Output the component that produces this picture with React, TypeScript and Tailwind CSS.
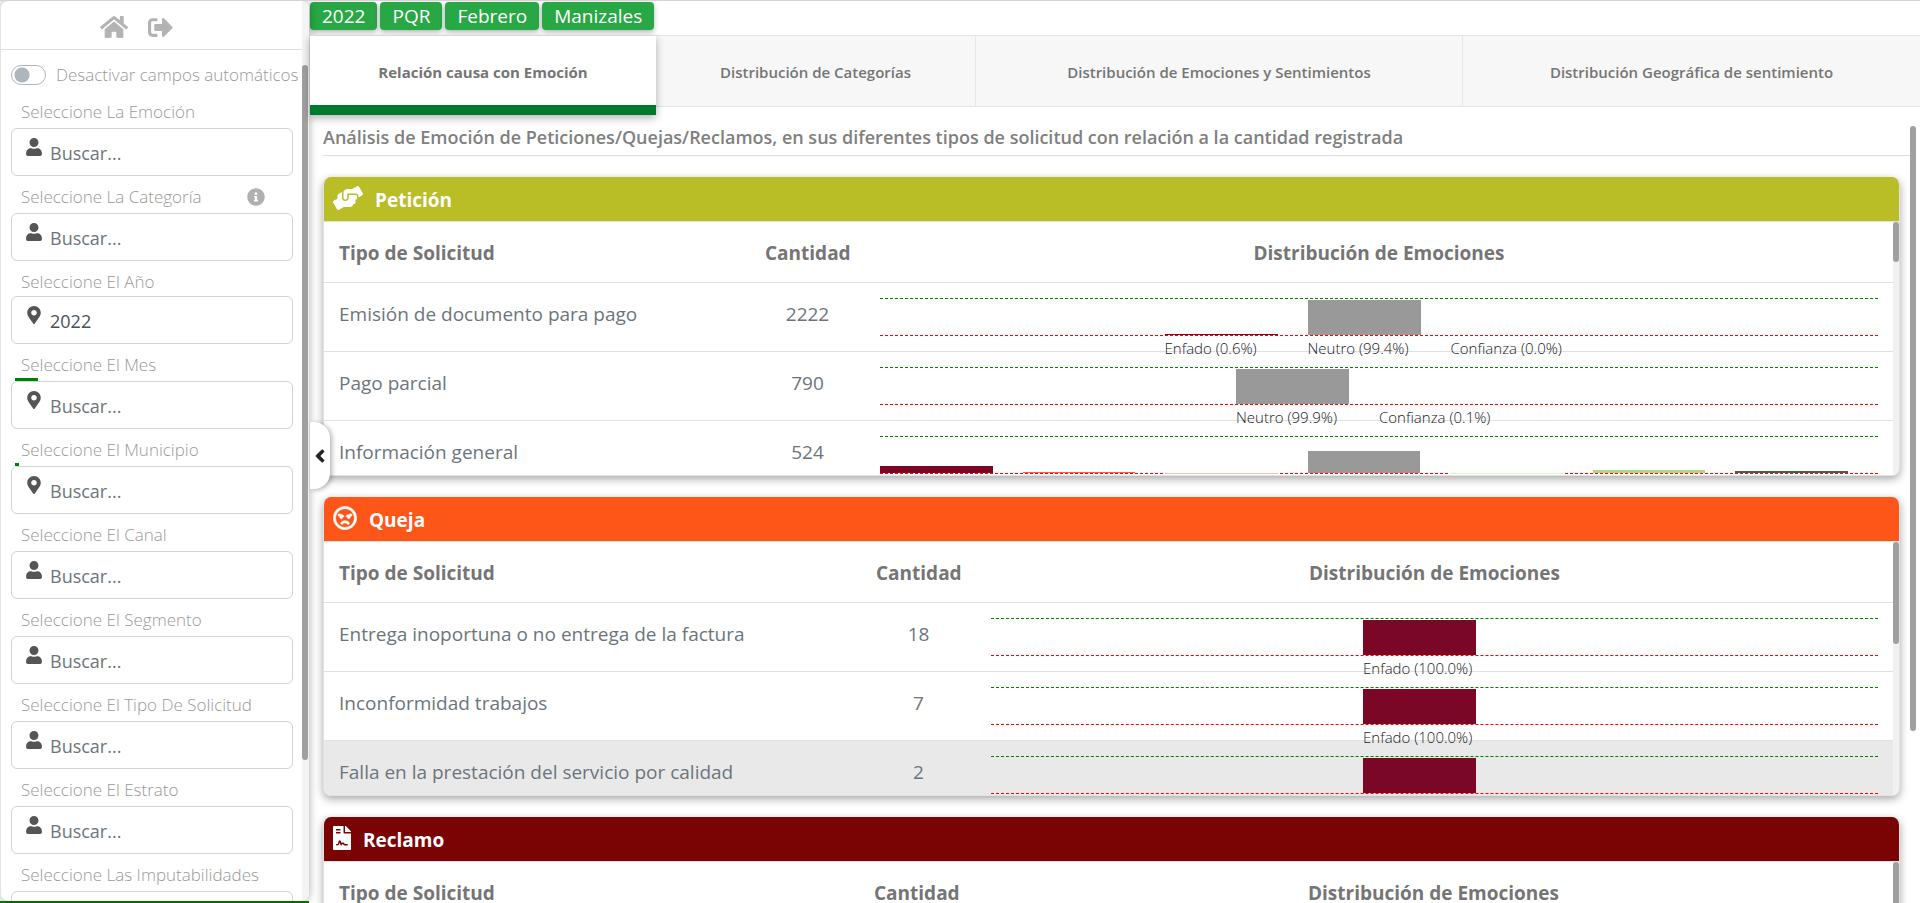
import type { ReactNode } from "react";
import type { IconType } from "react-icons";
import {
  FaHome,
  FaSignOutAlt,
  FaInfoCircle,
  FaUser,
  FaMapMarkerAlt,
  FaHandsHelping,
  FaRegAngry,
  FaFileContract,
  FaAngleLeft,
} from "react-icons/fa";

type Field = {
  id: string;
  label: string;
  icon: IconType;
  value?: string;
  info?: boolean;
  tight?: boolean;
  progress?: string;
};

const fields: Field[] = [
  { id: "emocion", label: "Seleccione La Emoción", icon: FaUser },
  { id: "categoria", label: "Seleccione La Categoría", icon: FaUser, info: true },
  { id: "anio", label: "Seleccione El Año", icon: FaMapMarkerAlt, value: "2022", tight: true },
  { id: "mes", label: "Seleccione El Mes", icon: FaMapMarkerAlt, progress: "w-[23px]" },
  { id: "municipio", label: "Seleccione El Municipio", icon: FaMapMarkerAlt, progress: "w-1" },
  { id: "canal", label: "Seleccione El Canal", icon: FaUser },
  { id: "segmento", label: "Seleccione El Segmento", icon: FaUser },
  { id: "tipo", label: "Seleccione El Tipo De Solicitud", icon: FaUser },
  { id: "estrato", label: "Seleccione El Estrato", icon: FaUser },
  { id: "imputabilidades", label: "Seleccione Las Imputabilidades", icon: FaUser },
];

type Bar = { height: number; color: string; label?: string; onBaseline?: boolean };
type Row = { name: string; count: number; bars: Bar[]; active?: boolean };
type Section = {
  title: string;
  icon: IconType;
  iconClass: string;
  headerClass: string;
  nameCol: string;
  thumb: string;
  rows: Row[];
};

const GREY = "#999999";
const WINE = "#7a0726";

const sections: Section[] = [
  {
    title: "Petición",
    icon: FaHandsHelping,
    iconClass: "h-6 w-[30px]",
    headerClass: "bg-[#b9bd26]",
    nameCol: "w-[426px]",
    thumb: "h-10",
    rows: [
      {
        name: "Emisión de documento para pago",
        count: 2222,
        bars: [
          { height: 1, color: WINE, label: "Enfado (0.6%)" },
          { height: 35, color: GREY, label: "Neutro (99.4%)" },
          { height: 0, color: "#ccffbb", label: "Confianza (0.0%)" },
        ],
      },
      {
        name: "Pago parcial",
        count: 790,
        bars: [
          { height: 35, color: GREY, label: "Neutro (99.9%)" },
          { height: 0, color: "#ccffbb", label: "Confianza (0.1%)" },
        ],
      },
      {
        name: "Información general",
        count: 524,
        bars: [
          { height: 7, color: WINE },
          { height: 1, color: "#f4604a" },
          { height: 1, color: "#eec3a6", onBaseline: true },
          { height: 22, color: GREY },
          { height: 1, color: "#ccffbb", onBaseline: true },
          { height: 3, color: "#a6dc84" },
          { height: 2, color: "#2f6b4f" },
        ],
      },
    ],
  },
  {
    title: "Queja",
    icon: FaRegAngry,
    iconClass: "size-6 stroke-white stroke-[12]",
    headerClass: "bg-[#fd5618]",
    nameCol: "w-[537px]",
    thumb: "h-[102px]",
    rows: [
      {
        name: "Entrega inoportuna o no entrega de la factura",
        count: 18,
        bars: [{ height: 35, color: WINE, label: "Enfado (100.0%)" }],
      },
      {
        name: "Inconformidad trabajos",
        count: 7,
        bars: [{ height: 35, color: WINE, label: "Enfado (100.0%)" }],
      },
      {
        name: "Falla en la prestación del servicio por calidad",
        count: 2,
        active: true,
        bars: [{ height: 35, color: WINE }],
      },
    ],
  },
  {
    title: "Reclamo",
    icon: FaFileContract,
    iconClass: "h-6 w-[18px]",
    headerClass: "bg-[#7a0404]",
    nameCol: "w-[535px]",
    thumb: "h-[102px]",
    rows: [],
  },
];

const tabs = [
  "Relación causa con Emoción",
  "Distribución de Categorías",
  "Distribución de Emociones y Sentimientos",
  "Distribución Geográfica de sentimiento",
];

const tags = ["2022", "PQR", "Febrero", "Manizales"];

function FilterField({ field }: { field: Field }) {
  const Icon = field.icon;
  return (
    <div className="pt-[9px]">
      <div className="flex h-6 items-center pl-[10px]">
        <label htmlFor={field.id} className="text-[17px] leading-6 font-light whitespace-nowrap">
          {field.label}
        </label>
        {field.info && <FaInfoCircle className="mr-7 ml-auto size-[18px] text-[#b0b0b0]" />}
      </div>
      <div className={`flex items-end pl-1 ${field.tight ? "h-[2px]" : "h-1"}`}>
        {field.progress && <div className={`h-[3px] bg-[#008000] ${field.progress}`} />}
      </div>
      <div className="flex h-12 rounded-md border border-[#ced4da] bg-white pl-[14px]">
        <Icon className="mt-[9px] h-[18px] w-4 shrink-0 text-[#555]" />
        <input
          id={field.id}
          type="text"
          defaultValue={field.value}
          placeholder="Buscar..."
          className="min-w-0 flex-1 bg-transparent pt-[2px] pl-2 text-[18px] text-[#495057] outline-none placeholder:text-[#6c757d]"
        />
      </div>
    </div>
  );
}

function Sidebar() {
  return (
    <aside className="z-10 flex w-[309px] shrink-0 flex-col border-b-2 border-[#008000] bg-white">
      <div className="flex min-h-0 flex-1 overflow-hidden rounded-lg border-l border-[#e3e3e3] shadow-[0_0_8px_rgba(0,0,0,0.35)]">
        <div className="min-w-0 flex-1 overflow-hidden text-[#999]">
          <nav className="flex h-[49px] items-center justify-center gap-5 border-b border-[#dedede] pt-1 pr-[30px]">
            <a href="#inicio" aria-label="Inicio">
              <FaHome className="h-[26px] w-7 text-[#b3b3b3]" />
            </a>
            <a href="#salir" aria-label="Salir">
              <FaSignOutAlt className="size-[25px] text-[#b3b3b3]" />
            </a>
          </nav>
          <div className="pr-[9px] pl-[10px]">
            <label className="flex items-center gap-[10px] pt-[13px] text-[17px] leading-6 font-light whitespace-nowrap">
              <input
                type="checkbox"
                role="switch"
                className="h-5 w-[35px] shrink-0 appearance-none rounded-full border border-[#adb5bd] bg-[radial-gradient(circle_at_10px_9px,#adb5bd_7px,transparent_8px)]"
              />
              Desactivar campos automáticos
            </label>
            <div className="pt-1">
              {fields.map((field) => (
                <FilterField key={field.id} field={field} />
              ))}
            </div>
          </div>
        </div>
        <div className="w-[7px] shrink-0 bg-[#f4f4f4] pt-16">
          <div className="h-[695px] w-1.5 rounded-full bg-[#a0a0a0]" />
        </div>
      </div>
    </aside>
  );
}

function EmotionChart({ bars }: { bars: Bar[] }) {
  return (
    <div className="h-[53px]">
      <div className="flex h-[38px] items-end justify-center border-y border-dashed border-t-[#008000] border-b-[#ff0000]">
        {bars.map((bar, i) => (
          <div key={i} className="h-full max-w-[143px] flex-1 pr-[30px]">
            <div className={`flex items-end ${bar.onBaseline ? "h-[37px]" : "h-9"}`}>
              <div className="w-full" style={{ height: bar.height, backgroundColor: bar.color }} />
            </div>
            {bar.label && (
              <div className="pt-[3px] text-[15px] leading-5 font-light whitespace-nowrap text-[#222]">{bar.label}</div>
            )}
          </div>
        ))}
      </div>
    </div>
  );
}

function HeaderCell({ className, children }: { className: string; children: ReactNode }) {
  return <th className={`h-[60px] border-b border-[#dee2e6] px-[15px] pt-[2px] font-bold ${className}`}>{children}</th>;
}

function SectionCard({ section }: { section: Section }) {
  const Icon = section.icon;
  return (
    <section className="flex h-[299px] shrink-0 flex-col overflow-hidden rounded-lg border-x border-b border-[#e2e2e2] bg-white shadow-[0_3px_8px_rgba(0,0,0,0.35)]">
      <header className={`flex h-11 shrink-0 items-center gap-3 pl-[9px] text-white ${section.headerClass}`}>
        <Icon className={`mb-[2px] ${section.iconClass}`} />
        <h2 className="pt-[2px] text-[19px] leading-6 font-bold">{section.title}</h2>
      </header>
      <div className="flex min-h-0 flex-1 border-t border-[#dee2e6]">
        <div className="min-w-0 flex-1 overflow-hidden">
          <table className="w-full table-fixed border-collapse text-[19px] leading-6 text-[#6c757d]">
            <thead className="text-[#757575]">
              <tr>
                <HeaderCell className={`text-left ${section.nameCol}`}>Tipo de Solicitud</HeaderCell>
                <HeaderCell className="w-[115px]">Cantidad</HeaderCell>
                <HeaderCell className="">Distribución de Emociones</HeaderCell>
              </tr>
            </thead>
            <tbody>
              {section.rows.map((row) => (
                <tr key={row.name} className={`h-[69px] border-b border-[#dee2e6] ${row.active ? "bg-[#e9e9e9]" : ""}`}>
                  <td className="px-[15px] pb-[6px]">{row.name}</td>
                  <td className="pb-[6px] text-center">{row.count}</td>
                  <td className="px-[15px] pt-[15px] align-top">
                    <EmotionChart bars={row.bars} />
                  </td>
                </tr>
              ))}
            </tbody>
          </table>
        </div>
        <div className="w-1.5 shrink-0 bg-[#f1f1f1]">
          <div className={`rounded-full bg-[#a0a0a0] ${section.thumb}`} />
        </div>
      </div>
    </section>
  );
}

export default function App() {
  return (
    <div className="flex h-screen overflow-hidden border-t border-[#d4d4d4] bg-white font-['Open_Sans',sans-serif]">
      <Sidebar />
      <main className="relative flex min-w-0 flex-1 flex-col pl-px">
        <div className="flex h-[34px] shrink-0 items-start gap-[3px] pt-px">
          {tags.map((tag) => (
            <span
              key={tag}
              className="rounded-sm bg-[#28a745] px-3 text-[19px] leading-7 text-white shadow-[0_2px_5px_rgba(0,0,0,0.3)]"
            >
              {tag}
            </span>
          ))}
        </div>
        <div
          role="tablist"
          className="z-10 grid h-[72px] shrink-0 grid-cols-[346fr_320fr_487fr_457fr] grid-rows-[70px] border-y border-[#e6e6e6] bg-[#f7f7f7] text-[15px] font-semibold text-[#757575]"
        >
          {tabs.map((tab, i) =>
            i === 0 ? (
              <button
                key={tab}
                role="tab"
                aria-selected="true"
                className="h-[79px] border-b-10 border-[#007a2c] bg-white pt-[3px] font-bold shadow-[0_3px_8px_rgba(0,0,0,0.3)]"
              >
                {tab}
              </button>
            ) : (
              <button key={tab} role="tab" aria-selected="false" className="border-r border-[#e6e6e6] pt-[2px] last:border-r-0">
                {tab}
              </button>
            ),
          )}
        </div>
        <div className="flex min-h-0 flex-1">
          <div className="flex min-w-0 flex-1 flex-col overflow-hidden pl-[13px]">
            <h1 className="mt-3 h-[37px] shrink-0 border-b border-[#dcdcdc] pt-[6px] text-[18px] leading-6 font-semibold text-[#808080]">
              Análisis de Emoción de Peticiones/Quejas/Reclamos, en sus diferentes tipos de solicitud con relación a la
              cantidad registrada
            </h1>
            <div className="flex flex-col gap-[21px] pt-[21px] pr-[10px]">
              {sections.map((section) => (
                <SectionCard key={section.title} section={section} />
              ))}
            </div>
          </div>
          <div className="w-[10px] shrink-0 pt-[19px]">
            <div className="h-[605px] w-1.5 rounded-full bg-[#a0a0a0]" />
          </div>
        </div>
        <button
          aria-label="Ocultar panel"
          className="absolute top-[421px] left-px z-20 flex h-[67px] w-5 items-center justify-center rounded-r-2xl bg-white text-[#212529] shadow-[2px_1px_5px_rgba(0,0,0,0.3)]"
        >
          <FaAngleLeft className="size-5 stroke-current stroke-[16]" />
        </button>
      </main>
    </div>
  );
}
